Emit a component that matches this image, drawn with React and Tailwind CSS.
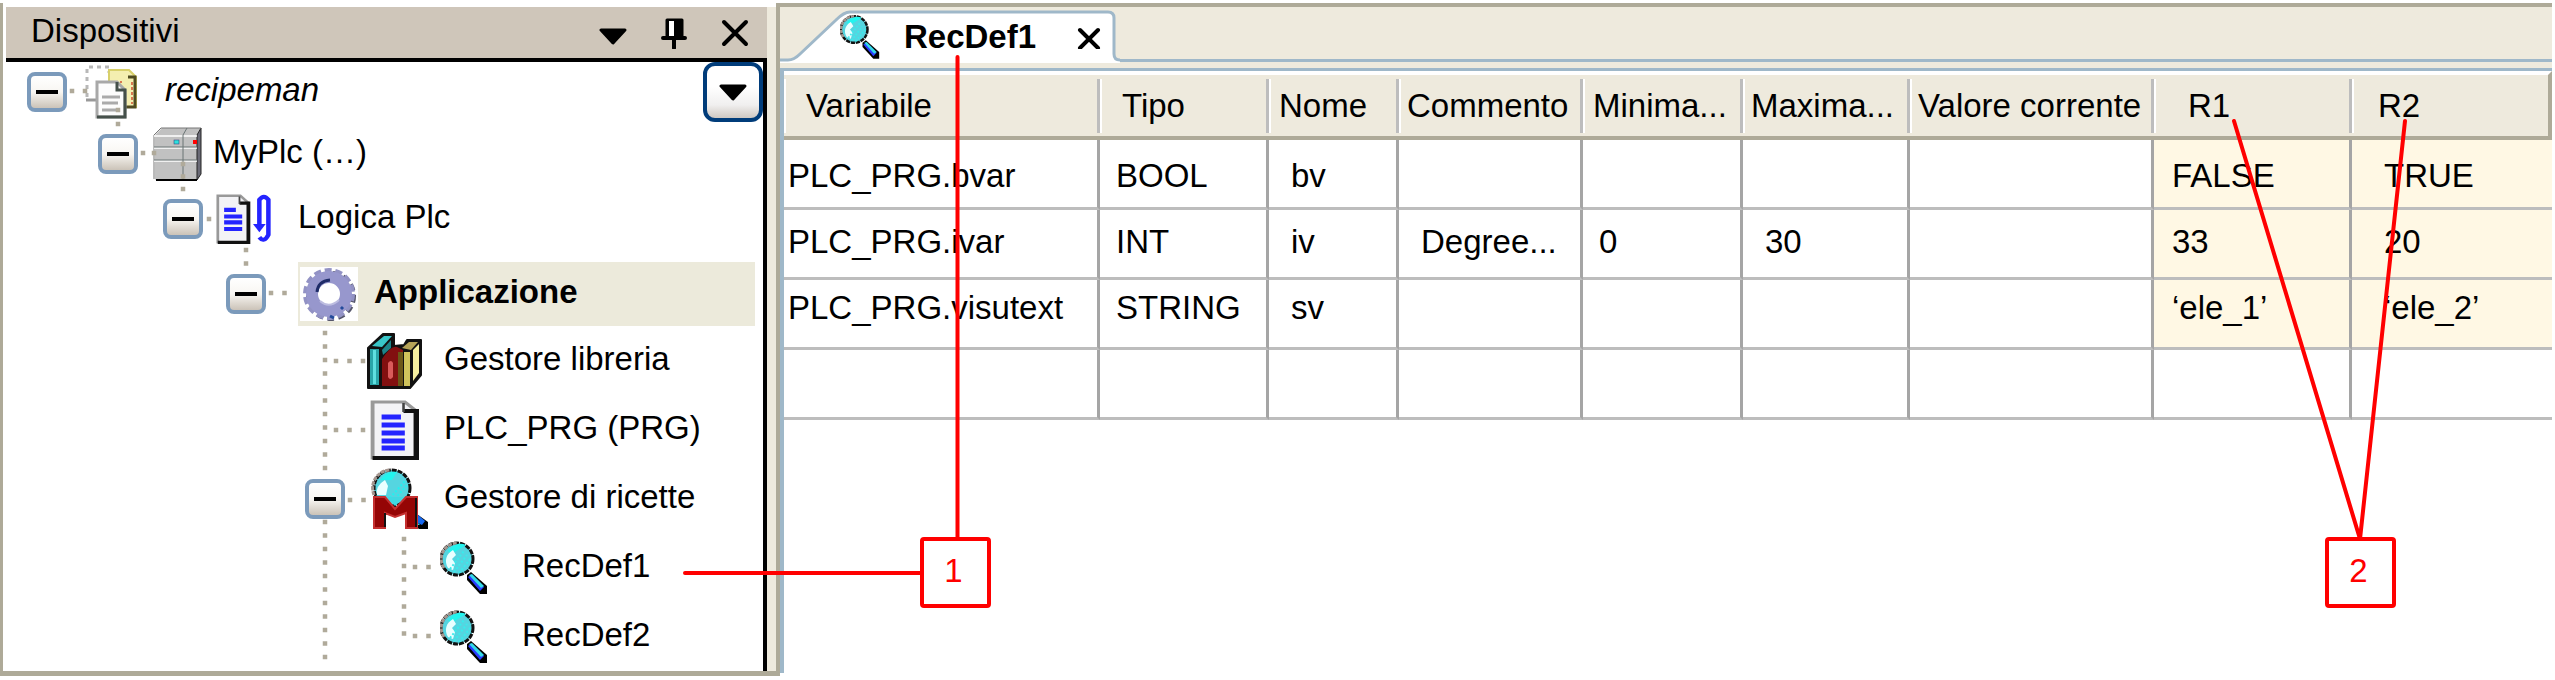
const columns = [
  { label: "Variabile", width: "w-[316px]", head: "pl-5", cell: "pl-1" },
  { label: "Tipo", width: "w-[169px]", head: "pl-5", cell: "pl-4" },
  { label: "Nome", width: "w-[130px]", head: "pl-2", cell: "pl-[22px]" },
  { label: "Commento", width: "w-[184px]", head: "pl-1.5", cell: "pl-[22px]" },
  { label: "Minima...", width: "w-[160px]", head: "pl-2", cell: "pl-4" },
  { label: "Maxima...", width: "w-[167px]", head: "pl-1.5", cell: "pl-[22px]" },
  { label: "Valore corrente", width: "w-[244px]", head: "pl-1.5", cell: "pl-4" },
  { label: "R1", width: "w-[198px]", head: "pl-8", cell: "pl-[18px]" },
  { label: "R2", width: "", head: "pl-6", cell: "pl-8" },
];

const rows = [
  { pad: "pt-3", fill: "bg-[#fff8e4]", values: ["PLC_PRG.bvar", "BOOL", "bv", "", "", "", "", "FALSE", "TRUE"] },
  { pad: "pt-2", fill: "bg-[#fff8e4]", values: ["PLC_PRG.ivar", "INT", "iv", "Degree...", "0", "30", "", "33", "20"] },
  { pad: "pt-1", fill: "bg-[#fff8e4]", values: ["PLC_PRG.visutext", "STRING", "sv", "", "", "", "", "‘ele_1’", "‘ele_2’"] },
  { pad: "pt-1", fill: "bg-white", values: ["", "", "", "", "", "", "", "", ""] },
];

// dotted tree connectors: start point, step and number of dots
const connectors = [
  { x: 72, y: 91, dx: 13, dy: 0, n: 2 },
  { x: 118, y: 110, dx: 0, dy: 14, n: 2 },
  { x: 143, y: 153, dx: 11, dy: 0, n: 2 },
  { x: 183, y: 164, dx: 0, dy: 12.5, n: 3 },
  { x: 209, y: 219, dx: 9, dy: 0, n: 1 },
  { x: 246, y: 250, dx: 0, dy: 13.5, n: 2 },
  { x: 271, y: 293, dx: 13.5, dy: 0, n: 2 },
  { x: 325, y: 333, dx: 0, dy: 13.5, n: 25 },
  { x: 336, y: 361, dx: 13.5, dy: 0, n: 3 },
  { x: 336, y: 430, dx: 13.5, dy: 0, n: 3 },
  { x: 350, y: 500, dx: 13.5, dy: 0, n: 2 },
  { x: 404, y: 539, dx: 0, dy: 13.5, n: 8 },
  { x: 415, y: 567, dx: 13.5, dy: 0, n: 2 },
  { x: 415, y: 636, dx: 13.5, dy: 0, n: 2 },
];

function Connectors() {
  return (
    <svg className="pointer-events-none absolute -left-[6px] -top-[62px] h-[680px] w-[760px]" viewBox="0 0 760 680" aria-hidden="true">
      {connectors.flatMap((c, i) =>
        Array.from({ length: c.n }, (_, k) => (
          <rect
            key={`${i}-${k}`}
            x={c.x + c.dx * k - 2.25}
            y={c.y + c.dy * k - 2.25}
            width="4.5"
            height="4.5"
            fill="#b0aa9a"
          />
        ))
      )}
    </svg>
  );
}

function MagnifierIcon({ className }) {
  return (
    <svg className={className} viewBox="0 0 48 54" aria-hidden="true">
      <path d="M27 34l4-3 16 14v8h-7L27 39z" fill="#000" />
      <path d="M28 36l3-2 13 12-4 4z" fill="#2a3cff" />
      <path d="M29 34l3-1 12 12-3 2z" fill="#35d8e8" />
      <circle cx="17" cy="18" r="16" fill="#55d5e0" stroke="#111" strokeWidth="3" strokeDasharray="5 1" />
      <path d="M4 27A16 16 0 0 1 17 2" fill="none" stroke="#a5968f" strokeWidth="3" strokeDasharray="4 1" />
      <path d="M8 10c5-7 12-9 18-6l-8 5-7 4z" fill="#22f4ee" />
      <path d="M13 9c-7 4-9 11-5 18l5 2 2-7-3-4 4-4z" fill="#e9ffff" />
      <path d="M14 31l13-17M19 32l12-15M10 28l14-18" stroke="#39ecec" strokeWidth="2" strokeDasharray="2 2" />
    </svg>
  );
}

function ProjectIcon() {
  return (
    <svg className="h-[54px] w-[52px]" viewBox="0 0 52 54" aria-hidden="true">
      <path d="M2 32V2h22v6" fill="none" stroke="#b8b8b8" strokeWidth="3" strokeDasharray="4 4" />
      <path d="M1 35h11" stroke="#999" strokeWidth="3" />
      <path d="M24 5h20l7 7v30H24z" fill="#f4eeb0" stroke="#d8d06a" strokeWidth="2" />
      <path d="M43 12h7v30H40" fill="none" stroke="#4f4a20" strokeWidth="3" />
      <path d="M25 17h12M47 17v22" stroke="#d05030" strokeWidth="1.5" strokeDasharray="3 2" />
      <path d="M12 17h20l8 8v27H12z" fill="#fcfcfc" stroke="#a8a8a8" strokeWidth="3" />
      <path d="M32 17v8h8v27H12" fill="none" stroke="#45504a" strokeWidth="3" />
      <path d="M17 32h18M17 38h16M17 45h16" stroke="#aaa" strokeWidth="3" />
    </svg>
  );
}

function PlcIcon() {
  return (
    <svg className="h-[54px] w-[50px]" viewBox="0 0 50 54" aria-hidden="true">
      <path d="M2 52V8l7-7h38v46l-4 6H3z" fill="#c1c1c1" />
      <path d="M44 8l4-7v46l-4 6z" fill="#6a6a76" stroke="#222" />
      <path d="M1 8l7-7h40M1 8v44" fill="none" stroke="#777" />
      <path d="M1 9h43M1 21h43M1 34h43" stroke="#fff" strokeWidth="1.5" />
      <path d="M1 20h43M1 33h43M30 52V8l4-7" fill="none" stroke="#6a7474" />
      <path d="M3 53h41" stroke="#000" strokeWidth="2" />
      <rect x="21" y="13" width="5" height="4" fill="#2de0dc" stroke="#337" strokeWidth=".5" />
      <rect x="40" y="13" width="4" height="4" fill="#f00" />
    </svg>
  );
}

function PageShape({ lines }) {
  return (
    <>
      <path d="M2 2h25l8 8v48H2z" fill="#f3f3f6" stroke="#999" strokeWidth="3" />
      <path d="M26 11h10v47H2" fill="none" stroke="#111" strokeWidth="4" />
      <path d="M26 3v9" stroke="#444" strokeWidth="2" />
      <path d={lines} stroke="#2424ff" strokeWidth="5" />
    </>
  );
}

function LogicIcon() {
  return (
    <svg className="h-[50px] w-[56px]" viewBox="0 0 62 60" preserveAspectRatio="none" aria-hidden="true">
      <PageShape lines="M9 19h13M9 27h20M9 34h20M9 42h20" />
      <path d="M48 40V7q5-7 10 0v42q-5 10-10 3" fill="none" stroke="#2424ff" strokeWidth="5" strokeLinejoin="round" />
      <path d="M41 36h14l-7 10z" fill="#2424ff" />
    </svg>
  );
}

function PouIcon() {
  return (
    <svg className="h-[60px] w-[49px]" viewBox="0 0 38 60" preserveAspectRatio="none" aria-hidden="true">
      <PageShape lines="M9 17h15M9 25h18M9 33h18M9 41h18M9 48h18" />
    </svg>
  );
}

function GearIcon() {
  return (
    <svg className="h-[54px] w-[58px] bg-white" viewBox="0 0 58 54" aria-hidden="true">
      <circle cx="31" cy="29" r="21" fill="none" stroke="#55566a" strokeWidth="8" strokeDasharray="6 4" />
      <circle cx="29" cy="27" r="22" fill="none" stroke="#9292c4" strokeWidth="8" strokeDasharray="6.5 3.4" />
      <circle cx="29" cy="27" r="17" fill="none" stroke="#9797cd" strokeWidth="12" />
      <path d="M17 25q1-11 13-12" fill="none" stroke="#1f2c68" strokeWidth="3" />
      <path d="M20 34q9 8 19-1" fill="none" stroke="#bcbce0" strokeWidth="2" />
      <path d="M30 49l4 2M41 42l2-2" stroke="#234a9a" strokeWidth="3" />
    </svg>
  );
}

function LibraryIcon() {
  return (
    <svg className="h-[57px] w-[57px]" viewBox="0 0 57 57" aria-hidden="true">
      <path d="M2 16L17 2h11v12l10-1 3-5h14v35L44 56H2z" fill="#111" stroke="#111" strokeWidth="2" strokeLinejoin="round" />
      <path d="M4 17h9v36H4z" fill="#2aa5a8" />
      <path d="M7 18h3v34H7z" fill="#5fe0e0" />
      <path d="M6 14L18 4h8L16 15z" fill="#39c6c8" />
      <path d="M16 18l9-10v8l-8 7z" fill="#1d8488" />
      <path d="M16 27q9-14 15-12l6 3v36H16z" fill="#821010" />
      <path d="M22 31q3-4 5 0v14q-3 4-5 0z" fill="#d95a5a" />
      <path d="M32 20h5v34h-5z" fill="#6b5718" />
      <path d="M38 20h6v34h-6z" fill="#cfc35c" />
      <path d="M36 16l7-6h9l-7 8z" fill="#b5a358" />
      <path d="M47 18l6-6v29l-6 8z" fill="#f6f0a0" />
    </svg>
  );
}

function RecipeManagerIcon() {
  return (
    <svg className="h-[62px] w-[60px]" viewBox="0 0 60 62" aria-hidden="true">
      <path d="M44 44l14 10v7h-9l-8-6z" fill="#000" />
      <path d="M47 46l8 7-3 4-6-3z" fill="#1668f0" />
      <path d="M46 53l4 4h-4z" fill="#35e0e8" />
      <circle cx="22" cy="20" r="18" fill="#55d5e0" stroke="#111" strokeWidth="3" strokeDasharray="5 1" />
      <path d="M4 27A18 18 0 0 1 20 2" fill="none" stroke="#a5968f" strokeWidth="3" strokeDasharray="4 1" />
      <path d="M10 12q7-10 17-8l-5 8z" fill="#22f4ee" />
      <path d="M15 12q-10 6-8 15h9l2-9z" fill="#e9ffff" />
      <path d="M20 30l15-17M25 31l12-14" stroke="#22f0f0" strokeWidth="2" strokeDasharray="2 2" />
      <path d="M4 29h11l10 12 11-12h11v31H36V45l-11 4-10-4v15H4z" fill="#950505" stroke="#c43030" strokeWidth="2" />
      <path d="M15 59V45M46 30v29" stroke="#111" strokeWidth="2" />
      <path d="M17 29l8 9 9-9z" fill="#3fd9e2" />
    </svg>
  );
}

function ToggleButton({ label }) {
  return (
    <button
      type="button"
      aria-label={`Comprimi ${label}`}
      className="relative z-10 flex size-10 shrink-0 items-center justify-center rounded-lg border-4 border-[#7b9abb] bg-linear-to-b from-white via-[#f8f6f2] to-[#cbc3b8]"
    >
      <span className="h-1 w-[22px] bg-black" />
    </button>
  );
}

const tree = [
  { label: "recipeman", row: "h-[60px] pl-[21px]", icon: <ProjectIcon />, slot: "ml-[18px] w-[80px]", text: "italic", toggle: true },
  { label: "MyPlc (…)", row: "h-[64px] pl-[92px]", icon: <PlcIcon />, slot: "ml-[15px] w-[60px]", text: "", toggle: true },
  { label: "Logica Plc", row: "h-[66px] pl-[157px]", icon: <LogicIcon />, slot: "ml-[13px] w-[82px]", text: "", toggle: true },
  { label: "Applicazione", row: "mt-[10px] h-[64px] pl-[220px]", icon: <GearIcon />, toggle: true, selected: true },
  { label: "Gestore libreria", row: "h-[69px] pl-[360px]", icon: <LibraryIcon />, slot: "w-[78px]", text: "" },
  { label: "PLC_PRG (PRG)", row: "h-[69px] pl-[364px]", icon: <PouIcon />, slot: "w-[74px]", text: "" },
  { label: "Gestore di ricette", row: "h-[69px] pl-[299px]", icon: <RecipeManagerIcon />, slot: "ml-[25px] w-[74px]", text: "", toggle: true },
  { label: "RecDef1", row: "h-[69px] pl-[434px]", icon: <MagnifierIcon className="h-[54px] w-[48px]" />, slot: "w-[82px]", text: "" },
  { label: "RecDef2", row: "h-[69px] pl-[434px]", icon: <MagnifierIcon className="h-[54px] w-[48px]" />, slot: "w-[82px]", text: "" },
];

function TreeRow({ item }) {
  return (
    <li className={`flex items-center ${item.row}`}>
      {item.toggle && <ToggleButton label={item.label} />}
      {item.selected ? (
        <div className="ml-[32px] mr-[8px] flex h-full flex-1 items-center bg-[#eceadb] pl-[2px]">
          <span className="w-[74px] shrink-0">{item.icon}</span>
          <span className="pb-1 font-bold">{item.label}</span>
        </div>
      ) : (
        <>
          <span className={`shrink-0 ${item.slot}`}>{item.icon}</span>
          <span className={`pb-1 ${item.text}`}>{item.label}</span>
        </>
      )}
    </li>
  );
}

function DevicePanel() {
  return (
    <aside className="flex w-[780px] shrink-0 border-b-[5px] border-l-[3px] border-r-4 border-[#aeaa98] pl-[3px] pt-1">
      <div className="flex-1">
        <header className="flex h-[51px] items-center bg-[#cfc6ba] pl-[25px] pr-[18px]">
          <h2 className="flex-1 pb-1">Dispositivi</h2>
          <div className="flex items-center gap-[34px]">
            <button type="button" aria-label="Menu">
              <svg className="h-[30px] w-[28px]" viewBox="0 0 28 30">
                <path d="M2 12h24L14 25z" stroke="#000" strokeWidth="3" strokeLinejoin="round" />
              </svg>
            </button>
            <button type="button" aria-label="Blocca">
              <svg className="h-8 w-[26px]" viewBox="0 0 26 32">
                <path d="M6 3h15v18H6z" fill="#000" stroke="#000" strokeWidth="3" strokeLinejoin="round" />
                <path d="M8 4h5v15H8z" fill="#fff" />
                <path d="M2 21h22M13 21v10" stroke="#000" strokeWidth="4" strokeLinecap="round" />
              </svg>
            </button>
            <button type="button" aria-label="Chiudi pannello">
              <svg className="h-[30px] w-[28px]" viewBox="0 0 28 30">
                <path d="M3 4l22 22M25 4L3 26" stroke="#000" strokeWidth="4" strokeLinecap="round" />
              </svg>
            </button>
          </div>
        </header>
        <div className="relative border-r-4 border-t-4 border-black">
          <ul>
            {tree.map((item) => (
              <TreeRow key={item.label} item={item} />
            ))}
          </ul>
          <Connectors />
          <button
            type="button"
            aria-label="Opzioni"
            className="absolute right-0 top-0 flex size-[60px] items-center justify-center rounded-xl border-4 border-[#003c7a] bg-linear-to-b from-white from-40% via-[#f0efef] via-75% to-[#cfc8c2]"
          >
            <svg className="h-[30px] w-[28px]" viewBox="0 0 28 30">
              <path d="M2 9h24L14 22z" stroke="#000" strokeWidth="3" strokeLinejoin="round" />
            </svg>
          </button>
        </div>
      </div>
      <div className="w-[9px] bg-[#eeeadd]" />
    </aside>
  );
}

function Editor() {
  return (
    <main className="min-w-0 flex-1 pr-[3px]">
      <div className="flex h-[59px] border-t-4 border-[#aeaa98] bg-[#eeeadd]">
        <div className="relative flex w-[340px] items-center pl-[60px] pt-1">
          <svg className="absolute left-0 top-0 h-[56px] w-[340px]" viewBox="0 0 340 56" aria-hidden="true">
            <path d="M0 53h8q6 0 12-6L56 13q8-8 14-8h258q6 0 6 6v36q0 6 6 6v3H0z" fill="#fff" />
            <path d="M0 53h8q6 0 12-6L56 13q8-8 14-8h258q6 0 6 6v36q0 6 6 6" fill="none" stroke="#9fb8c9" strokeWidth="3" />
          </svg>
          <MagnifierIcon className="relative h-[46px] w-[40px]" />
          <span className="relative ml-6 w-[173px] font-bold">RecDef1</span>
          <button type="button" aria-label="Chiudi scheda" className="relative">
            <svg className="size-6" viewBox="0 0 24 24">
              <path d="M3 5l18 18M21 5L3 23" stroke="#000" strokeWidth="4" strokeLinecap="round" />
            </svg>
          </button>
        </div>
        <div className="flex-1 border-b-[3px] border-[#9fb8c9]" />
      </div>
      <div className="h-[6px] bg-[#eeeadd]" />
      <div className="min-h-[605px] border-l-4 border-t-[3px] border-[#9fb8c9]">
        <table className="w-full table-fixed border-separate border-spacing-0">
          <thead>
            <tr>
              {columns.map((col) => (
                <th
                  key={col.label}
                  scope="col"
                  className={`h-[69px] border-b-4 border-t-4 border-b-[#aeaa98] border-t-white bg-[#eeeadd] p-0 text-left font-normal last:border-r-4 last:border-r-[#aeaa98] ${col.width}`}
                >
                  <div
                    className={`flex h-[54px] items-center whitespace-nowrap border-l-2 border-white ${col.head} ${
                      col.label === "R2" ? "" : "border-r-[3px] border-r-[#bdbdbd]"
                    }`}
                  >
                    <span>{col.label}</span>
                  </div>
                </th>
              ))}
            </tr>
          </thead>
          <tbody>
            {rows.map((row, r) => (
              <tr key={r}>
                {row.values.map((value, c) => (
                  <td
                    key={c}
                    className={`h-[70px] border-b-[3px] border-r-[3px] border-b-[#bdbdbd] border-r-[#a5a5a5] py-0 pr-0 align-top last:border-r-0 ${columns[c].cell} ${
                      c > 6 ? row.fill : "bg-white"
                    }`}
                  >
                    <div className={`whitespace-nowrap ${row.pad}`}>{value}</div>
                  </td>
                ))}
              </tr>
            ))}
          </tbody>
        </table>
      </div>
    </main>
  );
}

function Callouts() {
  return (
    <div className="pointer-events-none absolute inset-0 text-[#ff0000]">
      <svg className="absolute left-0 top-0 h-[680px] w-[2555px]" viewBox="0 0 2555 680" aria-hidden="true">
        <path
          d="M957.500 57V539M685 573H921M2234 121L2360 539L2405 121"
          fill="none"
          stroke="#ff0000"
          strokeWidth="4"
          strokeLinecap="round"
          strokeLinejoin="round"
        />
      </svg>
      <div className="absolute left-[920px] top-[537px] flex size-[71px] items-center justify-center rounded-sm border-4 border-[#ff0000] bg-white pb-1 pr-1">
        1
      </div>
      <div className="absolute left-[2325px] top-[537px] flex size-[71px] items-center justify-center rounded-sm border-4 border-[#ff0000] bg-white pb-1 pr-1">
        2
      </div>
    </div>
  );
}

export default function App() {
  return (
    <div className="relative overflow-hidden bg-white pt-[3px] font-['Liberation_Sans',Arial,sans-serif] text-[33px] leading-[48px] text-black">
      <div className="flex items-start">
        <DevicePanel />
        <Editor />
      </div>
      <Callouts />
    </div>
  );
}
